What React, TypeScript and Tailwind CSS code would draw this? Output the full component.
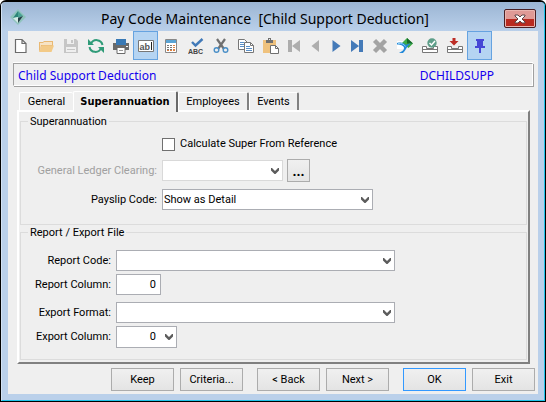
import { useState, type ReactNode } from 'react';
import clsx from 'clsx';

type Tool = {
  label: string;
  icon: ReactNode;
  narrow?: boolean;
  pressed?: boolean;
  disabled?: boolean;
};

const tools: Tool[] = [
  {
    label: 'New',
    icon: <path d="M2.500 1.500h6.500l4 4v9h-10.500zM9 1.500v4h4" fill="#fff" stroke="#6b6b6b" strokeWidth="1.200" />,
  },
  {
    label: 'Open',
    icon: (
      <>
        <path d="M1 14V4h4l1-1h9v5H4z" fill="#e9b872" />
        <path d="M2 5h3l1-1h8v3H3l-1 5z" fill="#f7e3c4" />
        <path d="M1 14 4 7.500h12L13.500 14z" fill="#f3ca87" />
      </>
    ),
  },
  {
    label: 'Save',
    disabled: true,
    icon: (
      <>
        <path d="M1 1h12l2 2v12H1z" fill="#c6c6c6" />
        <path d="M4 1h7v5H4zM3 9h10v5H3z" fill="#efefef" />
        <path d="M8 2h2v3H8zM4 11h8v1H4z" fill="#c6c6c6" />
      </>
    ),
  },
  {
    label: 'Refresh',
    icon: (
      <>
        <path d="M3 6A6 6 0 0 1 14.500 7M13 10A6 6 0 0 1 1.500 9" fill="none" stroke="#2f9b78" strokeWidth="2" />
        <path d="M0 1v6h6zM16 15V9h-6z" fill="#2f9b78" />
      </>
    ),
  },
  {
    label: 'Print',
    icon: (
      <>
        <path d="M0 5h16v7H0z" fill="#6a6a6a" />
        <path d="M3 1h10v6H3z" fill="#3979b5" />
        <path d="M13 8h2v1h-2z" fill="#fff" />
        <path d="M4 9.500h8v6H4z" fill="#fff" stroke="#6a6a6a" />
        <path d="M6 12h4v1H6z" fill="#999" />
      </>
    ),
  },
  {
    label: 'Edit text',
    pressed: true,
    icon: (
      <>
        <path d="M.5 2.500h15v11H.5z" fill="#fff" stroke="#777" />
        <text x="1.500" y="11.500" fontSize="9" fontWeight="700" fontFamily="Liberation Sans, sans-serif" fill="#555">ab</text>
        <path d="M13 4h1v8h-1z" fill="#222" />
      </>
    ),
  },
  {
    label: 'Calculator',
    icon: (
      <>
        <path d="M2.500 1.500h11v13h-11z" fill="#fff" stroke="#888" />
        <path d="M3 2h10v3H3z" fill="#5aa3d4" />
        <path d="M4 7h2v1H4zM7 7h2v1H7zM4 9h2v1H4zM7 9h2v1H7zM4 11h2v1H4zM7 11h2v1H7z" fill="#777" />
        <path d="M10 7h2v1h-2zM10 9h2v1h-2zM10 11h2v2h-2zM4 12h2v1H4zM7 12h2v1H7z" fill="#e0813f" />
      </>
    ),
  },
  {
    label: 'Spelling',
    icon: (
      <>
        <path d="m4 4 3.500 3.500L14.500 1" fill="none" stroke="#4179b8" strokeWidth="2.400" />
        <text x="0" y="15.500" fontSize="7" fontWeight="700" fontFamily="Liberation Sans, sans-serif" fill="#444">ABC</text>
      </>
    ),
  },
  {
    label: 'Cut',
    icon: (
      <>
        <path d="m4 1 7 10M12 1 5 11" stroke="#707070" strokeWidth="2.200" />
        <circle cx="3.500" cy="12" r="2.300" fill="#efefef" stroke="#4a8fc7" strokeWidth="1.400" />
        <circle cx="12.500" cy="12" r="2.300" fill="#efefef" stroke="#4a8fc7" strokeWidth="1.400" />
      </>
    ),
  },
  {
    label: 'Copy',
    icon: (
      <>
        <path d="M.5 1.500h6l3 3v7h-9z" fill="#fff" stroke="#777" />
        <path d="M2 4.500h4M2 6.500h4M2 8.500h4" stroke="#5a8fc7" />
        <path d="M6.500 4.500h6l3 3v7h-9z" fill="#fff" stroke="#777" />
        <path d="M12.500 4.500v3h3" fill="none" stroke="#777" />
        <path d="M8 8.500h4M8 10.500h6M8 12.500h6" stroke="#5a8fc7" />
      </>
    ),
  },
  {
    label: 'Paste',
    icon: (
      <>
        <path d="M0 2h13v13H0z" fill="#efc27e" />
        <path d="M3 2h2V0h3v2h2v3H3z" fill="#707070" />
        <path d="M6 1h1v1H6z" fill="#efefef" />
        <path d="M7.500 7.500h5l3 3v5h-8z" fill="#fff" stroke="#707070" />
        <path d="M12.500 7.500v3h3" fill="none" stroke="#707070" />
      </>
    ),
  },
  {
    label: 'First record',
    narrow: true,
    disabled: true,
    icon: <path d="M2 2h4v12H2zM14 2v12L6 8z" fill="#adadad" />,
  },
  {
    label: 'Previous record',
    narrow: true,
    disabled: true,
    icon: <path d="M12 2v12L4.500 8z" fill="#adadad" />,
  },
  { label: 'Next record', narrow: true, icon: <path d="M4.500 2v12L12.500 8z" fill="#447ab8" /> },
  { label: 'Last record', narrow: true, icon: <path d="M2 2v12l8-6zM10 2h4v12h-4z" fill="#447ab8" /> },
  {
    label: 'Delete',
    disabled: true,
    icon: <path d="m2.500 2.500 11 11M13.500 2.500l-11 11" stroke="#a3a3a3" strokeWidth="4.400" />,
  },
  {
    label: 'Go to link',
    icon: (
      <>
        <path d="M0 3h8v8H0z" fill="#fff" />
        <path d="M10 0 16 5.500 11.500 10 5 5z" fill="#3cab45" />
        <path d="M10 0v5.500h6z" fill="#17672a" />
        <path d="M0 5c5-1 7 0 9 2 1.500-1 3-1.500 5-1.500-4 2-4 5-8 9.500H2c3-1.500 5-3 5-5S4 6.500 0 6.500z" fill="#2389d9" />
        <path d="M1 5.500c3.500-.5 6 .5 7.500 3" fill="none" stroke="#8fd0f5" />
      </>
    ),
  },
  {
    label: 'Approve',
    icon: (
      <>
        <path d="M.5 8.500h4v2h7v-2h4v6H.5zM.5 11.500h15" fill="#fff" stroke="#777" />
        <circle cx="10" cy="5" r="4.700" fill="#5e9e89" />
        <path d="m7.500 5 2 2L13 3" fill="none" stroke="#fff" strokeWidth="1.500" />
      </>
    ),
  },
  {
    label: 'Import',
    icon: (
      <>
        <path d="M.5 8.500h4v2h7v-2h4v6H.5zM.5 11.500h15" fill="#fff" stroke="#777" />
        <path d="M5.500 0h3v3h3L7 7.500 2.500 3h3z" fill="#bd2d26" />
      </>
    ),
  },
  {
    label: 'Pin window',
    pressed: true,
    icon: <path d="M4 1h8v2h-1v5h2v2H9v5H7v-5H3V8h2V3H4z" fill="#4747d6" />,
  },
];

const tabs = ['General', 'Superannuation', 'Employees', 'Events'];

const tabWidths = ['w-[54px]', 'w-[105px]', 'w-[71px]', 'w-[50px]'];

function ToolButton({ tool }: { tool: Tool }) {
  return (
    <button
      type="button"
      aria-label={tool.label}
      disabled={tool.disabled}
      className={clsx(
        'flex h-[29px] items-center justify-center border',
        tool.narrow ? 'w-[21px]' : 'w-[25px]',
        tool.pressed ? 'border-[#66a3e0] bg-[#b5d4f2]' : 'border-transparent',
      )}
    >
      <svg className="size-4 shrink-0" viewBox="0 0 16 16">{tool.icon}</svg>
    </button>
  );
}

type ComboProps = {
  id: string;
  value?: string;
  className: string;
  alignRight?: boolean;
  disabled?: boolean;
};

function Combo({ id, value = '', className, alignRight, disabled }: ComboProps) {
  return (
    <div className={clsx('relative', className)}>
      <select
        id={id}
        disabled={disabled}
        defaultValue={value}
        className={clsx(
          'h-full w-full appearance-none border bg-white pl-px text-black',
          alignRight ? 'pr-5 text-right' : 'pr-4',
          disabled ? 'border-[#d9d9d9]' : 'border-[#abadb3]',
        )}
      >
        <option value={value}>{value}</option>
      </select>
      <svg className="pointer-events-none absolute top-2 right-1 h-[6px] w-2" viewBox="0 0 8 6">
        <path d="M0 0h1l3 3 3-3h1v2.500L4.500 6h-1L0 2.500z" fill="#5c5c5c" />
      </svg>
    </div>
  );
}

function DialogButton({ children, primary }: { children: ReactNode; primary?: boolean }) {
  return (
    <button
      type="button"
      className={clsx(
        'h-[23px] w-[63px] border bg-linear-to-b from-[#f0f0f0] to-[#e4e4e4]',
        primary ? 'border-[#3399ff]' : 'border-[#acacac]',
      )}
    >
      {children}
    </button>
  );
}

export default function App() {
  const [activeTab, setActiveTab] = useState('Superannuation');

  return (
    <div className="flex min-h-screen flex-col rounded-t-md border border-t-2 border-black bg-[#bad0ea] font-[Roboto,sans-serif] text-[11px] leading-[14px] text-black">
      <div className="flex grow flex-col rounded-t-sm border-r border-b border-[#1fc4ea] border-l border-l-[#d3e2f3]">
        {/* Title bar */}
        <header className="flex h-[29px] items-center rounded-t-sm bg-linear-to-b from-[#9bb5d3] to-[#bad0ea] pl-2">
          <svg className="size-4 shrink-0" viewBox="0 0 16 16">
            <path d="M8 0 16 8 8 16 0 8z" fill="#8fc3bd" />
            <path d="M8 2v6L3 9z" fill="#2c8678" />
            <path d="m8 2 5 5-5 2z" fill="#4ba394" />
            <path d="m3 9 5-1v6z" fill="#d5ece7" />
            <path d="m8 9 5-2-5 7z" fill="#263f46" />
          </svg>
          <h1 className="mt-1 grow text-center font-['Noto_Sans',sans-serif] text-[14px] leading-5 whitespace-pre">
            Pay Code Maintenance  [Child Support Deduction]
          </h1>
          <button
            type="button"
            aria-label="Close"
            className="mt-1 mr-2 flex h-[19px] w-8 items-center justify-center rounded-xs border border-[#4a2024] bg-linear-to-b from-[#df9a96] from-50% to-[#b92b21] to-50% shadow-[inset_0_0_0_1px_#e9b5b0]"
          >
            <svg className="h-[10px] w-3" viewBox="0 0 12 10">
              <path d="M1 1h3l2 2 2-2h3v1L8 5l3 3v1H8L6 7 4 9H1V8l3-3-3-3z" fill="#fff" stroke="#5c4547" strokeWidth="1" />
            </svg>
          </button>
        </header>

        <main className="mr-1.5 mb-1.5 ml-1.5 flex grow flex-col bg-[#efefef]">
          <div role="toolbar" aria-label="Record tools" className="flex">
            {tools.map((tool) => (
              <ToolButton key={tool.label} tool={tool} />
            ))}
          </div>

          {/* Pay code summary */}
          <div className="mx-[5px] mt-[3px] border border-white border-t-[#a0a0a0] border-l-[#a0a0a0] shadow-[0_-1px_0_#fff,1px_1px_0_#a0a0a0]">
            <div className="flex h-[21px] items-end justify-between pr-[38px] pl-1 font-['Noto_Sans',sans-serif] text-[12px] leading-[18px] text-[#1400ee]">
              <span>Child Support Deduction</span>
              <span>DCHILDSUPP</span>
            </div>
          </div>

          <div role="tablist" className="mt-[5px] ml-[11px] flex h-[19px] items-end">
            {tabs.map((tab, i) => (
              <button
                key={tab}
                type="button"
                role="tab"
                aria-selected={tab === activeTab}
                onClick={() => setActiveTab(tab)}
                className={clsx(
                  'rounded-t-xs border-t border-l border-white bg-[#efefef]',
                  tabWidths[i],
                  tab === activeTab
                    ? "relative -mb-0.5 h-[21px] border-r-2 border-r-[#696969] font-['DejaVu_Sans_Condensed','DejaVu_Sans',sans-serif] font-bold"
                    : 'h-[18px]',
                  tab !== activeTab && i > 0 && 'border-r-2 border-r-[#808080]',
                )}
              >
                {tab}
              </button>
            ))}
          </div>

          <div
            role="tabpanel"
            aria-label={activeTab}
            className="mr-2 ml-[9px] border-2 border-t-white border-r-[#808080] border-b-[#808080] border-l-white px-px pt-0.5 pb-0.5"
          >
            <fieldset className="border border-[#dcdcdc] pb-[14px]">
              <legend className="ml-[7px] px-0.5 leading-[15px]">Superannuation</legend>
              <div className="flex h-[22px] items-end pl-[141px]">
                <input
                  id="calculate-super"
                  type="checkbox"
                  className="size-[13px] appearance-none border border-[#707070] bg-white checked:bg-[#3399ff]"
                />
                <label htmlFor="calculate-super" className="pl-[5px]">Calculate Super From Reference</label>
              </div>
              <div className="mt-2 flex items-center">
                <label htmlFor="gl-clearing" className="w-[141px] pr-[5px] text-right text-[#a0a0a0]">General Ledger Clearing:</label>
                <Combo id="gl-clearing" className="h-[21px] w-[121px]" disabled />
                <button
                  type="button"
                  aria-label="Browse ledger accounts"
                  className="ml-1 h-[23px] w-[23px] border border-[#acacac] bg-linear-to-b from-[#f0f0f0] to-[#e4e4e4] text-[14px] font-bold"
                >
                  ...
                </button>
              </div>
              <div className="mt-[7px] flex items-center">
                <label htmlFor="payslip-code" className="w-[141px] pr-[5px] text-right">Payslip Code:</label>
                <Combo id="payslip-code" value="Show as Detail" className="h-[21px] w-[211px]" />
              </div>
            </fieldset>

            <fieldset className="border border-[#dcdcdc] pb-[11px]">
              <legend className="ml-[7px] px-0.5 leading-[15px]">Report / Export File</legend>
              <div className="mt-[10px] flex items-center">
                <label htmlFor="report-code" className="w-[95px] pr-[5px] text-right">Report Code:</label>
                <Combo id="report-code" className="h-[21px] w-[279px]" />
              </div>
              <div className="mt-[3px] flex items-center">
                <label htmlFor="report-column" className="w-[95px] pr-[5px] text-right">Report Column:</label>
                <input
                  id="report-column"
                  type="text"
                  defaultValue="0"
                  className="h-[21px] w-[45px] border border-[#abadb3] bg-white pr-1 text-right"
                />
              </div>
              <div className="mt-[7px] flex items-center">
                <label htmlFor="export-format" className="w-[95px] pr-[5px] text-right">Export Format:</label>
                <Combo id="export-format" className="h-[21px] w-[279px]" />
              </div>
              <div className="mt-[3px] flex items-center">
                <label htmlFor="export-column" className="w-[95px] pr-[5px] text-right">Export Column:</label>
                <Combo id="export-column" value="0" className="h-[22px] w-[61px]" alignRight />
              </div>
            </fieldset>
          </div>

          <footer className="mt-auto flex justify-end gap-[14px] pt-1 pr-[3px] pb-[3px]">
            <div className="flex gap-1.5">
              <DialogButton>Keep</DialogButton>
              <DialogButton>Criteria...</DialogButton>
            </div>
            <div className="flex gap-1.5">
              <DialogButton>&lt; Back</DialogButton>
              <DialogButton>Next &gt;</DialogButton>
            </div>
            <div className="flex gap-1.5">
              <DialogButton primary>OK</DialogButton>
              <DialogButton>Exit</DialogButton>
            </div>
          </footer>
        </main>
      </div>
    </div>
  );
}
